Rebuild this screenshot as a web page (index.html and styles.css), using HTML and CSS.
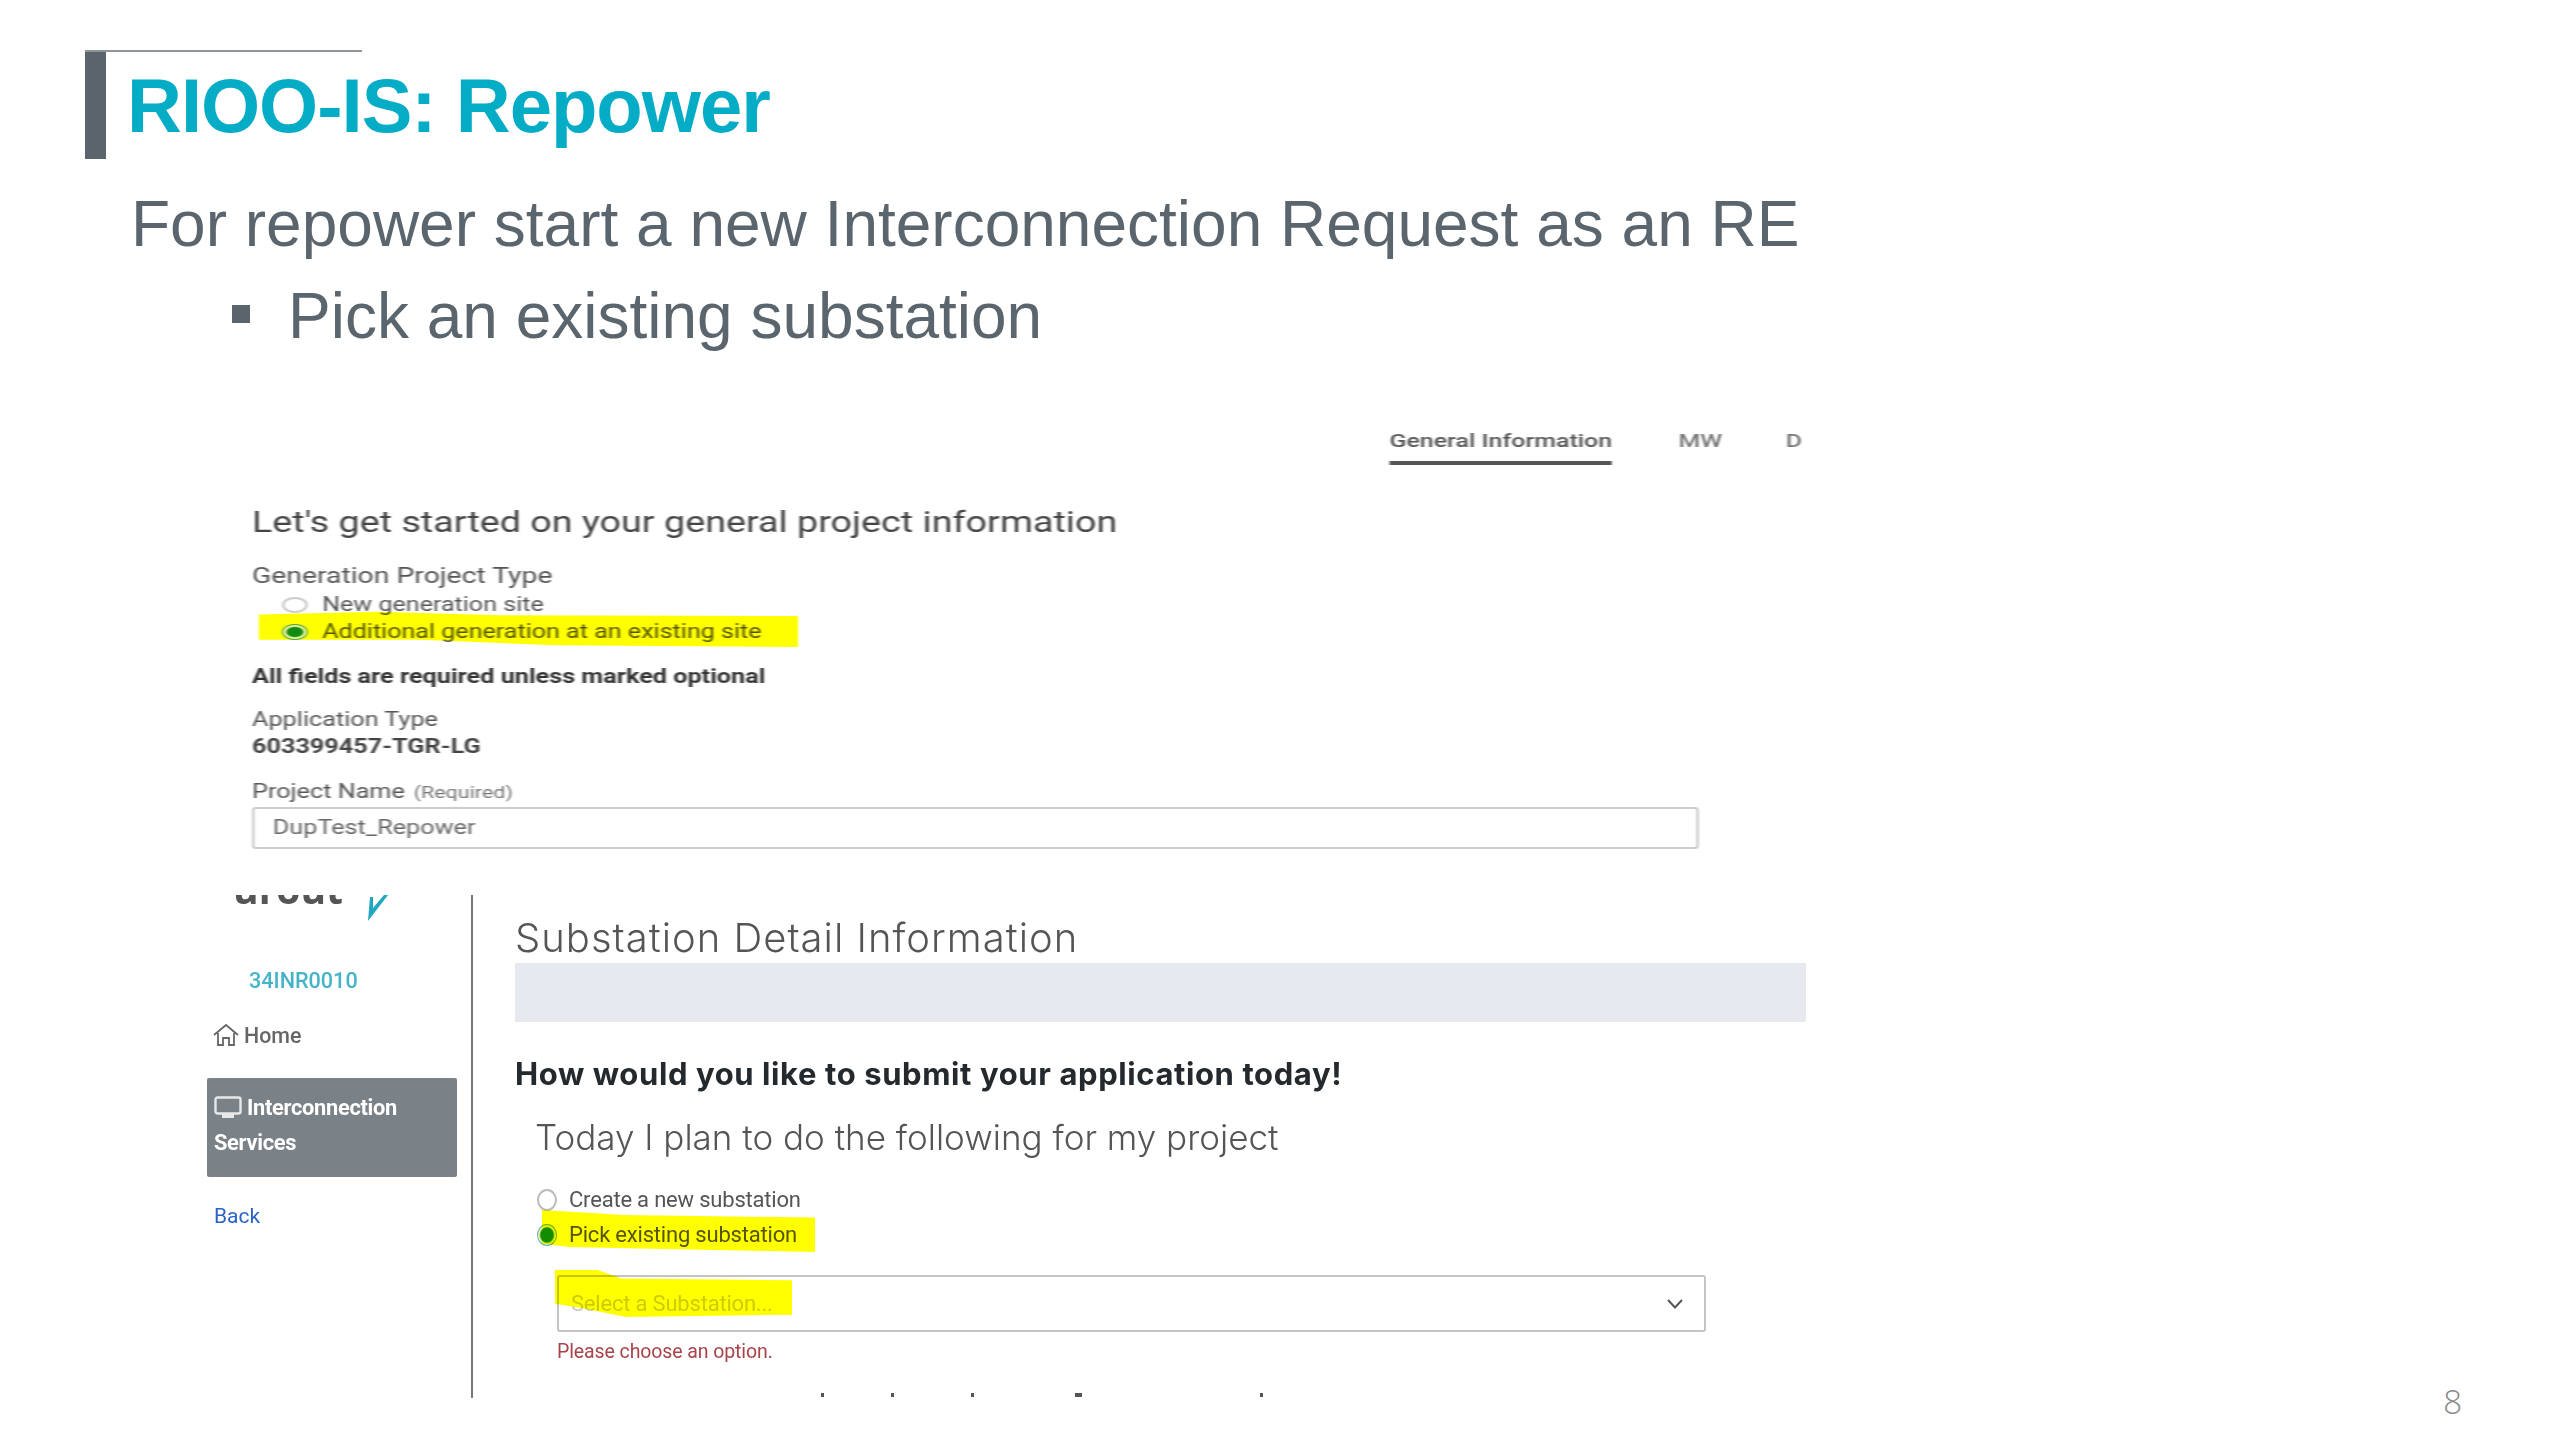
FILE: index.html
```html
<!DOCTYPE html>
<html lang="en">
<head>
<meta charset="utf-8">
<title>RIOO-IS: Repower</title>
<link rel="stylesheet" href="styles.css">
</head>
<body>
<div class="slide">
  <header class="head"><h1 class="title">RIOO-IS: Repower</h1></header>
  <p class="lead">For repower start a new Interconnection Request as an RE</p>
  <div class="sub"><span class="sq"></span><span>Pick an existing substation</span></div>

  <section class="form">
    <div class="tabs">
      <span class="tab on">General Information</span>
      <span class="tab">MW</span>
      <span class="tab tab-d">D</span>
    </div>
    <h2 class="form-h">Let's get started on your general project information</h2>
    <div class="lab first">Generation Project Type</div>
    <div class="rad">
      <span class="dot"></span><span>New generation site</span>
    </div>
    <div class="rad">
      <span class="hl hl-a"></span>
      <span class="dot sel"></span><span>Additional generation at an existing site</span>
    </div>
    <div class="note">All fields are required unless marked optional</div>
    <div class="lab app">Application Type</div>
    <div class="val">603399457-TGR-LG</div>
    <div class="lab name">Project Name <small>(Required)</small></div>
    <div class="inp">DupTest_Repower</div>
  </section>

  <div class="bottom">
    <section class="app-shot">
      <nav class="nav">
        <div class="logo">
          <span class="word"><span>urout</span></span>
          <svg class="tick" width="24" height="26" viewBox="0 0 24 26"><path d="M5 2 L8 2 L8 13 L19 0 L23 0 L3 26 Z" fill="#1fa8bf"/></svg>
        </div>
        <div class="nid">34INR0010</div>
        <div class="home">
          <svg width="26" height="24" viewBox="0 0 26 24"><path d="M1 12 L13 2 L25 12 M5 10 V22 H10 V15 H16 V22 H21 V10" fill="none" stroke="#666" stroke-width="1.8"/></svg>
          <span>Home</span>
        </div>
        <div class="active">
          <div class="act-l"><svg width="28" height="24" viewBox="0 0 28 24"><rect x="1.5" y="1.5" width="25" height="16" rx="2" fill="none" stroke="#e8e8e8" stroke-width="2.4"/><rect x="8" y="18" width="12" height="4" fill="#e8e8e8"/></svg><span>Interconnection</span></div>
          <div>Services</div>
        </div>
        <div class="back">Back</div>
      </nav>
      <main class="main">
        <h2 class="main-h">Substation Detail Information</h2>
        <div class="band"></div>
        <div class="how">How would you like to submit your application today!</div>
        <div class="today">Today I plan to do the following for my project</div>
        <div class="opt first-opt"><span class="circ"></span><span>Create a new substation</span></div>
        <div class="opt"><span class="hl hl-b"></span><span class="circ sel"></span><span>Pick existing substation</span></div>
        <div class="select">
          <span class="hl hl-c"></span>
          <span class="ph">Select a Substation...</span>
          <svg width="18" height="12" viewBox="0 0 18 12"><path d="M2 2 L9 9.5 L16 2" fill="none" stroke="#555" stroke-width="2"/></svg>
        </div>
        <div class="err">Please choose an option.</div>
        <div class="tips"><i></i><i class="t2"></i><i class="t3"></i><i class="t4"></i><i class="t5"></i></div>
      </main>
    </section>
    <div class="num">8</div>
  </div>
</div>
</body>
</html>
```

FILE: styles.css
```css
* { box-sizing: border-box; }
html, body { margin: 0; background: #fff; }
.slide { width: 2560px; height: 1440px; overflow: hidden; background: #fff; font-family: "Liberation Sans", Arial, sans-serif; color: #5b656d; }

.head { margin: 50px 0 0 85px; height: 109px; position: relative; border-left: 21px solid #5b646c; padding: 14px 0 0 21px; filter: blur(0.6px); }
.head::before { content: ""; position: absolute; left: -21px; top: 0; width: 277px; height: 2px; background: #8f9599; }
.title { margin: 0; font-size: 76px; line-height: 84px; font-weight: 700; letter-spacing: -1px; color: #05acc6; }

.lead { margin: 27px 0 0 131px; font-size: 64px; line-height: 76px; filter: blur(0.6px); white-space: nowrap; }
.sub { margin: 16px 0 0 232px; display: flex; align-items: center; gap: 38px; font-size: 64px; line-height: 76px; filter: blur(0.6px); }
.sq { width: 18px; height: 18px; background: #5b646c; margin-top: -4px; }

.form { position: relative; margin: 67px 0 0 252px; width: 1190px; height: 428px; padding-top: 8px; transform: scaleX(1.3); transform-origin: left top; filter: blur(0.7px); background: #fff; font-family: Roboto, "Liberation Sans", sans-serif; color: #555; font-size: 20px; }
.tabs { display: flex; padding-left: 875px; gap: 51px; }
.tab { line-height: 24px; padding-bottom: 8px; height: 36px; color: #777; font-weight: 500; font-size: 19.2px; white-space: nowrap; }
.tab.on { color: #555; border-bottom: 4px solid #555; }
.tab-d { margin-left: -2px; }
.form-h { margin: 41px 0 0; font-size: 29px; line-height: 32px; font-weight: 400; color: #444; white-space: nowrap; }
.lab { line-height: 24px; font-size: 19.4px; }
.lab.first { margin-top: 26px; font-size: 21.8px; }
.rad { position: relative; display: flex; align-items: center; gap: 11px; padding-left: 23px; height: 27px; font-size: 19.3px; color: #555; white-space: nowrap; }
.lab.first + .rad { margin-top: 3px; }
.dot { width: 20px; height: 16px; flex: none; border-radius: 50%; border: 2px solid #ccc; background: #fff; position: relative; }
.dot.sel { border: 1.5px solid #3fa33a; background: radial-gradient(ellipse at center, #128c10 0 45%, #f5f5a0 58%); }
.hl { position: absolute; background: #ffff00; mix-blend-mode: multiply; }
.hl-a { left: 5px; top: -7px; width: 415px; height: 36px; clip-path: polygon(0 10%, 22% 2%, 45% 12%, 100% 14%, 100% 100%, 55% 95%, 30% 80%, 0 80%); }
.note { margin-top: 20px; line-height: 24px; font-weight: 700; color: #333; font-size: 19.4px; white-space: nowrap; }
.lab.app { margin-top: 19px; }
.val { margin-top: 3px; line-height: 24px; font-weight: 700; color: #444; font-size: 19.4px; }
.lab.name { margin-top: 21px; }
.lab small { font-size: 16.5px; color: #777; margin-left: 2px; }
.inp { margin-top: 2px; width: 1113px; height: 42px; border: 2px solid #ccc; border-radius: 3px; padding-left: 14px; line-height: 38px; color: #666; font-size: 19.4px; }

.bottom { display: flex; align-items: flex-end; margin-left: 207px; }
.app-shot { display: flex; height: 503px; width: 1610px; margin-top: 46px; margin-bottom: 27px; overflow: hidden; font-family: Roboto, "Liberation Sans", sans-serif; filter: blur(0.7px); background: #fff; }
.nav { width: 266px; flex: none; border-right: 2px solid #777; font-size: 22px; }
.logo { height: 26px; display: flex; align-items: flex-start; padding-left: 26px; }
.word { display: flex; align-items: flex-end; height: 10px; width: 132px; overflow: hidden; font: 700 39px/32px "Open Sans", sans-serif; color: #555; }
.tick { flex: none; }
.nid { margin-top: 46px; padding-left: 42px; line-height: 28px; color: #45b4c8; font-size: 21.6px; font-weight: 500; }
.home { margin-top: 26px; padding-left: 6px; height: 28px; display: flex; align-items: center; gap: 5px; color: #666; font-weight: 500; font-size: 21.4px; }
.active { margin-top: 29px; width: 250px; height: 99px; background: #7a8187; border-radius: 2px; padding: 12px 0 0 7px; color: #fff; line-height: 35px; font-weight: 700; font-size: 21.8px; letter-spacing: -0.3px; }
.act-l { display: flex; align-items: center; gap: 5px; }
.back { margin-top: 25px; padding-left: 7px; line-height: 28px; color: #2a63c4; font-size: 21px; }

.main { width: 1291px; margin-left: 42px; flex: none; font-family: Inter, "Noto Sans", sans-serif; }
.main-h { margin: 18px 0 0; height: 50px; line-height: 50px; font-size: 40px; font-weight: 300; letter-spacing: 1px; color: #555; white-space: nowrap; }
.band { height: 59px; background: #e6e9ef; }
.how { margin-top: 32px; line-height: 40px; font-size: 31px; font-weight: 700; letter-spacing: 0.6px; color: #24292e; white-space: nowrap; }
.today { margin-top: 20px; padding-left: 20px; line-height: 46px; font-size: 35px; font-weight: 300; color: #555; white-space: nowrap; }
.opt { position: relative; display: flex; align-items: center; gap: 12px; height: 35px; padding-left: 22px; font-family: Roboto, sans-serif; font-size: 22px; letter-spacing: -0.2px; color: #555; white-space: nowrap; }
.first-opt { margin-top: 22px; }
.circ { width: 20px; height: 22px; flex: none; border: 2px solid #bbb; border-radius: 50%; background: #fff; }
.circ.sel { border: 1.5px solid #5fb0c0; background: radial-gradient(ellipse at center, #128c10 0 48%, #f5f5a0 62%); }
.hl-b { left: 27px; top: -7px; width: 273px; height: 42px; clip-path: polygon(0 0, 30% 12%, 100% 18%, 100% 100%, 40% 92%, 10% 88%, 0 80%); }
.select { position: relative; margin: 23px 0 0 42px; width: 1149px; height: 57px; border: 2px solid #c4c4c4; border-radius: 3px; display: flex; align-items: center; justify-content: space-between; padding: 0 20px 0 12px; font-family: Roboto, sans-serif; font-size: 22px; letter-spacing: -0.2px; color: #ccc; }
.hl-c { left: -4px; top: -7px; width: 237px; height: 47px; clip-path: polygon(0 0, 18% 0, 28% 18%, 100% 22%, 100% 95%, 30% 100%, 10% 80%, 0 72%); }
.err { margin: 7px 0 0 42px; line-height: 26px; font-family: Roboto, sans-serif; font-size: 19.5px; letter-spacing: -0.1px; color: #a8434a; }
.tips { margin: 28px 0 0 306px; height: 4px; display: flex; }
.tips i { width: 3px; height: 4px; background: #555; }
.tips .t2 { margin-left: 67px; }
.tips .t3 { margin-left: 77px; }
.tips .t4 { margin-left: 101px; width: 7px; }
.tips .t5 { margin-left: 178px; }

.num { margin: 0 0 5px auto; padding-right: 98px; font: 300 33px/36px "Open Sans", sans-serif; color: #888; }
```
